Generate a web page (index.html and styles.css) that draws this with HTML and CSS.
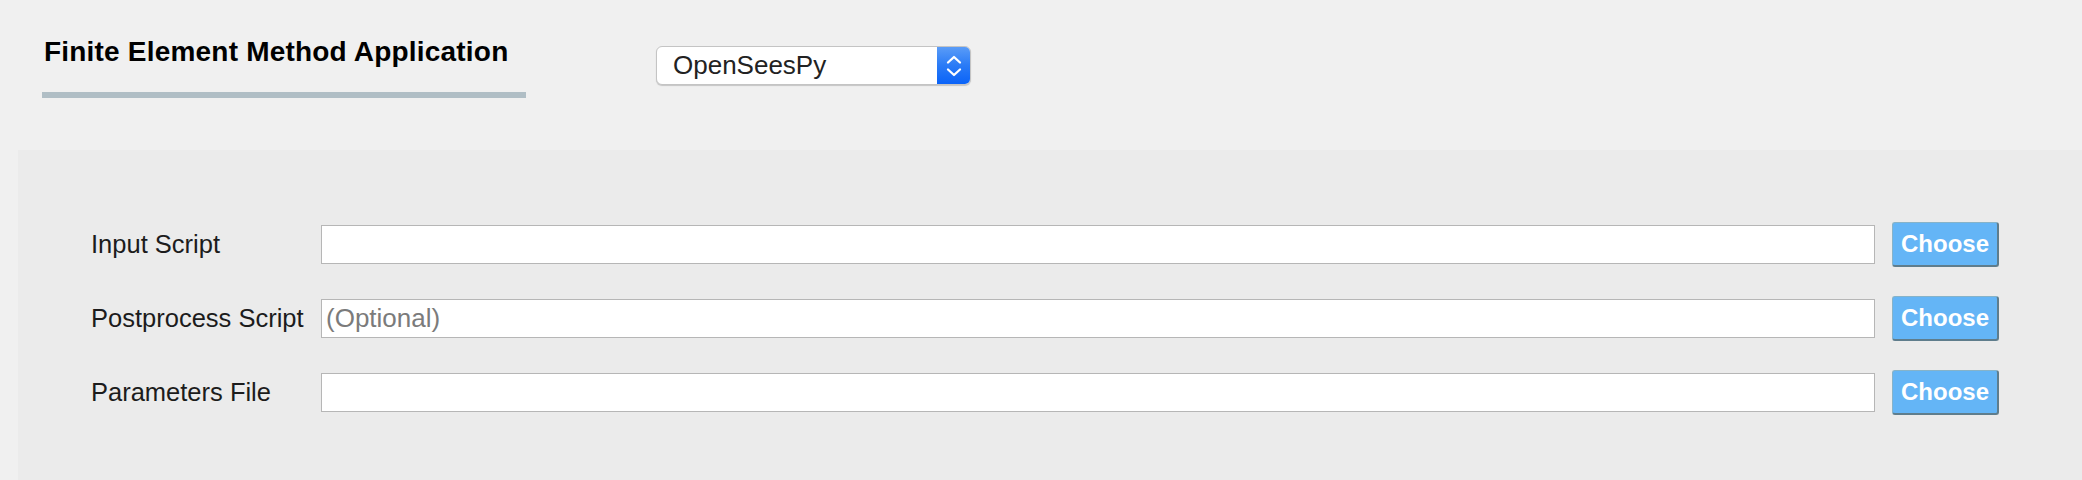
FILE: index.html
```html
<!DOCTYPE html>
<html lang="en">
<head>
<meta charset="utf-8">
<title>Finite Element Method Application</title>
<link rel="stylesheet" href="styles.css">
</head>
<body>
<div class="page">
  <header class="header">
    <div class="title-block">
      <h1 class="title">Finite Element Method Application</h1>
      <div class="title-rule"></div>
    </div>
    <div class="select">
      <span class="select-value">OpenSeesPy</span>
      <span class="select-arrows">
        <svg width="18" height="24" viewBox="0 0 18 24" fill="none" stroke="#ffffff" stroke-width="2.3" stroke-linecap="round" stroke-linejoin="round">
          <polyline points="3,8.5 9,3 15,8.5"/>
          <polyline points="3,15.5 9,21 15,15.5"/>
        </svg>
      </span>
    </div>
  </header>
  <section class="panel">
    <div class="form">
      <label class="label">Input Script</label>
      <input class="field" type="text">
      <button class="btn">Choose</button>

      <label class="label">Postprocess Script</label>
      <input class="field" type="text" placeholder="(Optional)">
      <button class="btn">Choose</button>

      <label class="label">Parameters File</label>
      <input class="field" type="text">
      <button class="btn">Choose</button>
    </div>
  </section>
</div>
</body>
</html>
```

FILE: styles.css
```css
html, body {
  margin: 0;
  padding: 0;
  background: #f0f0f0;
}

body {
  font-family: "Liberation Sans", Arial, sans-serif;
  color: #1c1c1c;
}

.page {
  width: 2082px;
  height: 480px;
  display: flex;
  flex-direction: column;
  overflow: hidden;
}

.header {
  height: 150px;
  box-sizing: border-box;
  padding: 38px 0 0 42px;
  display: flex;
  align-items: flex-start;
  flex-shrink: 0;
}

.title-block {
  width: 484px;
  display: flex;
  flex-direction: column;
}

.title {
  margin: 0;
  padding-left: 2px;
  font-size: 28px;
  line-height: 28px;
  font-weight: 700;
  color: #000000;
  letter-spacing: 0.2px;
  white-space: nowrap;
}

.title-rule {
  margin-top: 26px;
  height: 6px;
  background: #b0bec5;
}

.select {
  margin: 8px 0 0 130px;
  width: 315px;
  height: 39px;
  box-sizing: border-box;
  display: flex;
  align-items: stretch;
  background: #ffffff;
  border: 1px solid #c4c4c4;
  border-radius: 6px;
  box-shadow: 0 1px 1px rgba(0, 0, 0, 0.18);
  overflow: hidden;
}

.select-value {
  flex: 1;
  display: flex;
  align-items: center;
  padding-left: 16px;
  font-size: 26px;
  color: #222222;
}

.select-arrows {
  width: 33px;
  display: flex;
  align-items: center;
  justify-content: center;
  background: linear-gradient(to bottom, #5a9cf7 0%, #2a7bf6 50%, #0a63f8 100%);
}

.panel {
  flex: 1;
  margin-left: 18px;
  background: #ebebeb;
  box-sizing: border-box;
  padding: 72px 83px 0 73px;
}

.form {
  display: grid;
  grid-template-columns: 213px 1fr 107px;
  column-gap: 17px;
  row-gap: 29px;
  align-items: center;
}

.label {
  font-size: 25.5px;
  color: #1c1c1c;
  white-space: nowrap;
}

.field {
  height: 39px;
  box-sizing: border-box;
  margin: 0;
  border: 1px solid #b6b6b6;
  border-radius: 0;
  background: #ffffff;
  padding: 0 4px;
  font-family: "Liberation Sans", Arial, sans-serif;
  font-size: 26px;
  color: #1c1c1c;
  outline: none;
}

.field::placeholder {
  color: #7b7b7b;
}

.btn {
  width: 107px;
  height: 45px;
  box-sizing: border-box;
  margin: 0;
  padding: 0;
  background: #64b5f6;
  border-style: solid;
  border-width: 1px 2px 2px 1px;
  border-color: #86b3c9 #5f7d8c #5f7d8c #86b3c9;
  border-radius: 3px;
  color: #ffffff;
  font-family: "Liberation Sans", Arial, sans-serif;
  font-size: 24px;
  font-weight: 700;
  cursor: pointer;
}
```
